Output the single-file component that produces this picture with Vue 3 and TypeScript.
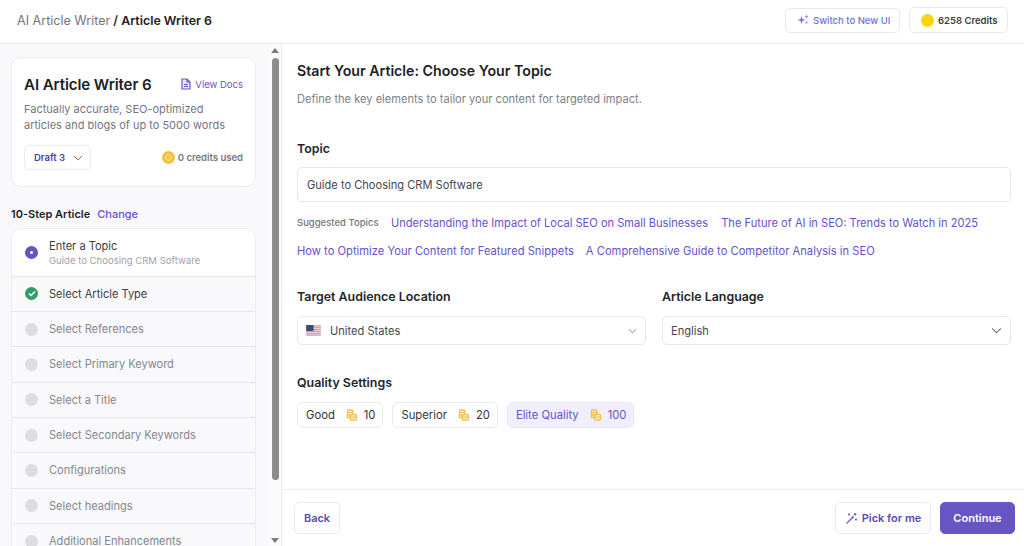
<script setup lang="ts">
const steps = ['Select References','Select Primary Keyword','Select a Title','Select Secondary Keywords','Configurations','Select headings','Additional Enhancements']
const row1 = ['Understanding the Impact of Local SEO on Small Businesses','The Future of AI in SEO: Trends to Watch in 2025']
const row2 = ['How to Optimize Your Content for Featured Snippets','A Comprehensive Guide to Competitor Analysis in SEO']
const quality = [
  { name: 'Good', cost: 10, on: false },
  { name: 'Superior', cost: 20, on: false },
  { name: 'Elite Quality', cost: 100, on: true },
]
</script>

<template>
  <div class="page">
    <header class="top">
      <div class="crumb"><span class="crumb-a">AI Article Writer</span><b> / Article Writer 6</b></div>
      <div class="top-actions">
        <button class="switch">
          <svg width="12" height="12" viewBox="0 0 12 12" fill="#8b6fe8"><path d="M4.500 2 5.500 5 8.500 6 5.500 7 4.500 10 3.500 7 .5 6 3.500 5Z"/><path d="M9.500 .5 10 2 11.500 2.500 10 3 9.500 4.500 9 3 7.500 2.500 9 2Z"/><circle cx="9.500" cy="8.500" r="1"/></svg>
          <span>Switch to New UI</span>
        </button>
        <button class="credits"><i class="coin"></i><span>6258 Credits</span></button>
      </div>
    </header>
    <div class="body">
      <aside class="side">
        <div class="side-scroll">
          <section class="card">
            <div class="card-head">
              <h2>AI Article Writer 6</h2>
              <span class="docs">
                <svg width="10" height="12" viewBox="0 0 10 12" fill="#ece8fa" stroke="#6a55c4" stroke-width="1.200"><path d="M1 1h5l3 3v7H1z"/><path d="M6 1v3h3M3 6.500h4M3 8.500h4" fill="none"/></svg>
                View Docs
              </span>
            </div>
            <p>Factually accurate, SEO-optimized articles and blogs of up to 5000 words</p>
            <div class="card-foot">
              <div class="draft">Draft 3
                <svg width="10" height="6" viewBox="0 0 10 6" fill="none" stroke="#777" stroke-width="1"><path d="M1 1l4 4 4-4"/></svg>
              </div>
              <div class="used"><i class="coin-sm"></i>0 credits used</div>
            </div>
          </section>
          <div class="steps-head"><b>10-Step Article</b><span>Change</span></div>
          <div class="steps">
            <div class="step first">
              <i class="dot purple"></i>
              <div class="first-text"><div class="name dark">Enter a Topic</div><div class="sub">Guide to Choosing CRM Software</div></div>
            </div>
            <div class="step">
              <i class="dot green"><svg width="8" height="7" viewBox="0 0 8 7" fill="none" stroke="#fff" stroke-width="1.500"><path d="M1 3.500l2 2 4-4"/></svg></i>
              <div class="name dark">Select Article Type</div>
            </div>
            <div v-for="s in steps" :key="s" class="step">
              <i class="dot"></i>
              <div class="name">{{ s }}</div>
            </div>
          </div>
        </div>
        <div class="bar">
          <i class="arrow up"></i>
          <div class="track"><div class="thumb"></div></div>
          <i class="arrow down"></i>
        </div>
      </aside>
      <main class="main">
        <div class="content">
          <h1>Start Your Article: Choose Your Topic</h1>
          <p class="lead">Define the key elements to tailor your content for targeted impact.</p>
          <h3 class="topic-label">Topic</h3>
          <div class="field topic">Guide to Choosing CRM Software</div>
          <div class="suggest">
            <span class="suggest-label">Suggested Topics</span>
            <a v-for="t in row1" :key="t">{{ t }}</a>
          </div>
          <div class="suggest second">
            <a v-for="t in row2" :key="t">{{ t }}</a>
          </div>
          <div class="two">
            <div class="col-a">
              <h3>Target Audience Location</h3>
              <div class="field select">
                <svg class="flag" width="15" height="11" viewBox="0 0 16 12">
                  <rect width="16" height="12" fill="#f3f3f3"/>
                  <path d="M0 1h16M0 3h16M0 5h16M0 7h16M0 9h16M0 11h16" stroke="#d9757a" stroke-width="1"/>
                  <rect width="8" height="6.500" fill="#3d4a7a"/>
                </svg>
                <span>United States</span>
                <svg class="chev" width="9" height="6" viewBox="0 0 10 6" fill="none" stroke="#aaa" stroke-width="1.200"><path d="M1 1l4 4 4-4"/></svg>
              </div>
            </div>
            <div class="col-b">
              <h3>Article Language</h3>
              <div class="field select">
                <span>English</span>
                <svg class="chev" width="11" height="7" viewBox="0 0 10 6" fill="none" stroke="#777" stroke-width="1"><path d="M1 1l4 4 4-4"/></svg>
              </div>
            </div>
          </div>
          <h3 class="quality-label">Quality Settings</h3>
          <div class="quality">
            <div v-for="q in quality" :key="q.name" class="q" :class="{ on: q.on }">
              <span>{{ q.name }}</span>
              <svg width="12" height="12" viewBox="0 0 11 12" fill="none" stroke="#f0c04e" stroke-width="1.300"><rect x="1" y="1" width="5.500" height="5" rx="1"/><path d="M1 3.500h5.500"/><rect x="4" y="5.500" width="6" height="5.500" rx="1.200" fill="#fff3d0"/><path d="M4 8.200h6M1 6v2.500h3"/></svg>
              <span class="cost">{{ q.cost }}</span>
            </div>
          </div>
        </div>
        <footer class="foot">
          <button class="back">Back</button>
          <div class="foot-right">
            <button class="pick">
              <svg width="13" height="13" viewBox="0 0 13 13" fill="none" stroke="#6a55c4" stroke-width="1.200"><path d="M1.500 11.500 8.500 4.500M7 4.500l1.500 1.500M10 1v2.500M8.800 2.200h2.500M11 6.500v2M10 7.500h2M4 1.500v2M3 2.500h2"/></svg>
              Pick for me
            </button>
            <button class="cont">Continue</button>
          </div>
        </footer>
      </main>
    </div>
  </div>
</template>

<style>
html, body { margin: 0; overflow: hidden; }
</style>

<style scoped>
* { box-sizing: border-box; }
.page { width: 1024px; height: 546px; display: flex; flex-direction: column; font-family: Inter, "Liberation Sans", sans-serif; color: #1c1e26; background: #fff; overflow: hidden; }
.top { height: 44px; flex: none; display: flex; align-items: center; justify-content: space-between; padding: 0 16px 3px 17px; border-bottom: 1px solid #eaeaec; }
.crumb { font-size: 12.400px; }
.crumb-a { color: #74767e; font-size: 12.550px; }
.crumb b { font-weight: 600; }
.top-actions { display: flex; gap: 9px; align-items: center; }
button { font-family: inherit; background: #fff; border: 1px solid #e9e9ee; display: flex; align-items: center; cursor: pointer; }
.switch { width: 115px; height: 25px; border-radius: 5px; gap: 4px; padding: 0 0 0 11px; font-size: 9.500px; color: #6f70e4; font-weight: 500; }
.credits { width: 99px; height: 26px; border-radius: 5px; gap: 4px; padding: 0 0 0 11px; font-size: 9.500px; font-weight: 600; color: #3b3c44; }
.coin { width: 13px; height: 13px; border-radius: 50%; background: #fdd40a; display: block; }
.body { flex: 1; display: flex; min-height: 0; }
.side { width: 282px; flex: none; display: flex; background: #f9f9fb; border-right: 1px solid #eaeaec; overflow: hidden; }
.side-scroll { width: 269px; padding: 13px 13px 0 11px; flex: none; }
.card { height: 130px; background: #fff; border: 1px solid #ededf1; border-radius: 10px; padding: 17px 12px 0 12px; }
.card-head { display: flex; justify-content: space-between; align-items: center; height: 20px; }
.card h2 { margin: 0; font-size: 15.100px; font-weight: 600; line-height: 20px; letter-spacing: -.1px; }
.docs { display: flex; align-items: center; gap: 4px; font-size: 9.500px; color: #6a55c4; margin-top: -2px; }
.card p { margin: 6px 0 0; font-size: 11px; line-height: 16px; color: #74767e; width: 215px; }
.card-foot { margin-top: 12px; display: flex; align-items: center; justify-content: space-between; }
.draft { width: 67px; height: 25px; border: 1px solid #ececf0; border-radius: 5px; display: flex; align-items: center; gap: 8px; padding-left: 9px; font-size: 9.500px; font-weight: 600; color: #4d3eb0; }
.used { display: flex; align-items: center; gap: 3px; font-size: 9.500px; font-weight: 600; color: #75777f; }
.coin-sm { width: 13px; height: 13px; border-radius: 50%; background: #f4c84a; border: 3px solid #f0c23a; box-shadow: inset 0 0 0 1px #fbe48f; display: block; }
.steps-head { margin-top: 20px; height: 14px; display: flex; align-items: center; gap: 7px; font-size: 11px; line-height: 14px; }
.steps-head b { font-weight: 600; }
.steps-head span { color: #6a4fd0; font-weight: 500; }
.steps { margin-top: 7px; border: 1px solid #ededf1; border-bottom: 0; border-radius: 10px 10px 0 0; overflow: hidden; }
.step { height: 35.350px; display: flex; align-items: center; gap: 11px; padding-left: 13px; border-bottom: 1px solid #e6e6ea; flex: none; }
.step.first { height: 47.500px; background: #fff; }
.first-text { padding-top: 2px; }
.dot { width: 13px; height: 13px; border-radius: 50%; background: #dcdce2; display: flex; align-items: center; justify-content: center; flex: none; }
.dot.purple { background: #6554c4; }
.dot.purple::after { content: ""; width: 3px; height: 3px; border-radius: 50%; background: #fff; }
.dot.green { background: #2f9e68; }
.name { font-size: 11.050px; line-height: 14px; color: #85868e; }
.name.dark { color: #3a3c44; }
.sub { font-size: 9.550px; line-height: 13px; margin-top: 1px; color: #a0a1a9; }
.bar { width: 12px; flex: none; margin-left: 0; display: flex; flex-direction: column; align-items: center; background: #fbfbfc; padding-top: 4px; }
.arrow { width: 0; height: 0; border-left: 4px solid transparent; border-right: 4px solid transparent; flex: none; }
.arrow.up { border-bottom: 5px solid #7a7a7a; }
.arrow.down { border-top: 5px solid #7a7a7a; margin-bottom: 3px; }
.track { flex: 1; width: 100%; padding-top: 5px; display: flex; justify-content: center; }
.thumb { width: 7px; height: 422px; background: #8b8b8b; border-radius: 4px; }
.main { flex: 1; min-width: 0; display: flex; flex-direction: column; }
.content { flex: 1; padding: 18px 13px 0 15px; }
h1 { margin: 0; font-size: 14.200px; line-height: 18px; font-weight: 600; }
.lead { margin: 12px 0 0; font-size: 11.100px; line-height: 15px; color: #7d7f87; }
h3 { margin: 0; font-size: 12.400px; line-height: 16px; font-weight: 600; color: #24262e; }
.topic-label { margin-top: 34px; }
.field { height: 35px; border: 1px solid #e6e6ea; border-radius: 5px; font-size: 11.100px; color: #44464e; display: flex; align-items: center; padding: 0 9px; background: #fff; }
.topic { margin-top: 10px; }
.suggest { display: flex; align-items: center; gap: 11px; margin-top: 13px; line-height: 16px; font-size: 11.100px; color: #6552cd; white-space: nowrap; }
.suggest a:nth-of-type(2) { margin-left: 2px; }
.suggest-label { font-size: 9.500px; font-weight: 500; color: #74767e; width: 83px; }
.second { margin-top: 12px; gap: 10px; font-size: 11.200px; }
.two { display: flex; gap: 16px; margin-top: 30px; }
.col-a { width: 349px; }
.col-b { flex: 1; }
.two .field { margin-top: 11px; height: 29px; padding: 0 8px; }
.select { gap: 9px; }
.chev { margin-left: auto; }
.quality-label { margin-top: 30px; }
.quality { display: flex; gap: 9px; margin-top: 11px; }
.q { height: 26px; display: flex; align-items: center; gap: 6px; padding: 0 7px 0 8px; border: 1px solid #e9e9ee; border-radius: 6px; font-size: 11.250px; color: #33353d; }
.q svg { margin-left: 5px; }
.q.on { background: #f0effb; color: #6552cd; border-color: #e8e6f6; }
.foot { height: 57px; flex: none; border-top: 1px solid #ececef; display: flex; align-items: center; justify-content: space-between; padding: 0 9px 0 12px; }
.foot button { height: 32px; border-radius: 5px; font-size: 11px; font-weight: 600; justify-content: center; }
.back { width: 46px; color: #5b4bb5; }
.foot-right { display: flex; gap: 9px; }
.pick { width: 96px; gap: 4px; color: #5b4bb5; }
.foot .cont { width: 75px; background: #6755c4; border-color: #6755c4; color: #fff; }
</style>
